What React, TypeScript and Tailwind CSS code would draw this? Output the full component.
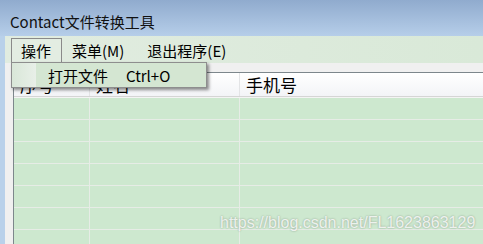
import React from "react";

const cjk = { fontFamily: '"Noto Sans CJK SC", "Noto Sans", sans-serif' };

export default function App() {
  const rows = Array.from({ length: 7 });
  return (
    <div
      className="relative w-[483px] h-[244px] overflow-hidden bg-[#b9d1ea] flex flex-col text-black"
      style={cjk}
    >
      {/* title bar */}
      <div className="h-[36px] shrink-0 bg-gradient-to-b from-[#90abce] to-[#b6cee9] flex items-center pl-[10px] pt-[6px]">
        <span className="text-[15px] leading-none text-[#111]">Contact文件转换工具</span>
      </div>

      <div className="flex-1 flex min-h-0">
        <div className="w-[5px] shrink-0" />
        <div className="flex-1 flex flex-col bg-[#f0f0f0] min-w-0">
          {/* menu bar */}
          <div className="h-[27px] shrink-0 bg-gradient-to-r from-[#e1ece0] to-[#d9e9d8] flex items-start pt-[2px] pl-[6px] text-[15px] leading-none">
            <div className="h-[24px] w-[51px] border border-b-0 border-[#8a8a8a] bg-[#e3ede2] flex items-center pl-[9px]">
              操作
            </div>
            <div className="h-[24px] flex items-center ml-[10px]">菜单(M)</div>
            <div className="h-[24px] flex items-center ml-[23px]">退出程序(E)</div>
          </div>
          <div className="h-[9px] shrink-0" />
          {/* list view */}
          <div className="flex-1 ml-[8px] border-l border-t border-[#7d878c] flex flex-col bg-[#cde8cf] min-h-0">
            <div className="h-[24px] shrink-0 bg-gradient-to-b from-white to-[#f3f4f7] border-b border-[#d5d5d5] flex text-[17px] leading-none">
              <div className="w-[76px] border-r border-[#e3e4e6] flex items-center pl-[6px]">序号</div>
              <div className="w-[150px] border-r border-[#e3e4e6] flex items-center pl-[6px]">姓名</div>
              <div className="flex-1 flex items-center pl-[6px]">手机号</div>
            </div>
            <div className="h-[1px] shrink-0 bg-[#f4f4f4]" />
            {rows.map((_, i) => (
              <div key={i} className="h-[22px] shrink-0 flex border-b border-[#e6ece6]">
                <div className="w-[76px] border-r border-[#e6ece6]" />
                <div className="w-[150px] border-r border-[#e6ece6]" />
                <div className="flex-1" />
              </div>
            ))}
          </div>
        </div>
      </div>

      {/* dropdown menu */}
      <div className="absolute left-[11px] top-[62px] w-[196px] h-[26px] border border-[#8e8e8e] bg-[#d4e6d2] shadow-[2px_2px_3px_rgba(0,0,0,0.45)] flex items-center text-[15px] leading-none">
        <div className="w-[24px] h-full bg-gradient-to-r from-[#d9e7d8] to-[#e8efe8]" />
        <span className="ml-[12px]">打开文件</span>
        <span className="ml-[18px]">Ctrl+O</span>
      </div>

      {/* watermark */}
      <div
        className="absolute left-[220px] top-[215px] text-[16px] leading-none text-white/80"
        style={{ fontFamily: '"Liberation Sans", Arial, sans-serif', textShadow: "0 0 2px rgba(0,0,0,0.35)" }}
      >
        https://blog.csdn.net/FL1623863129
      </div>
    </div>
  );
}
